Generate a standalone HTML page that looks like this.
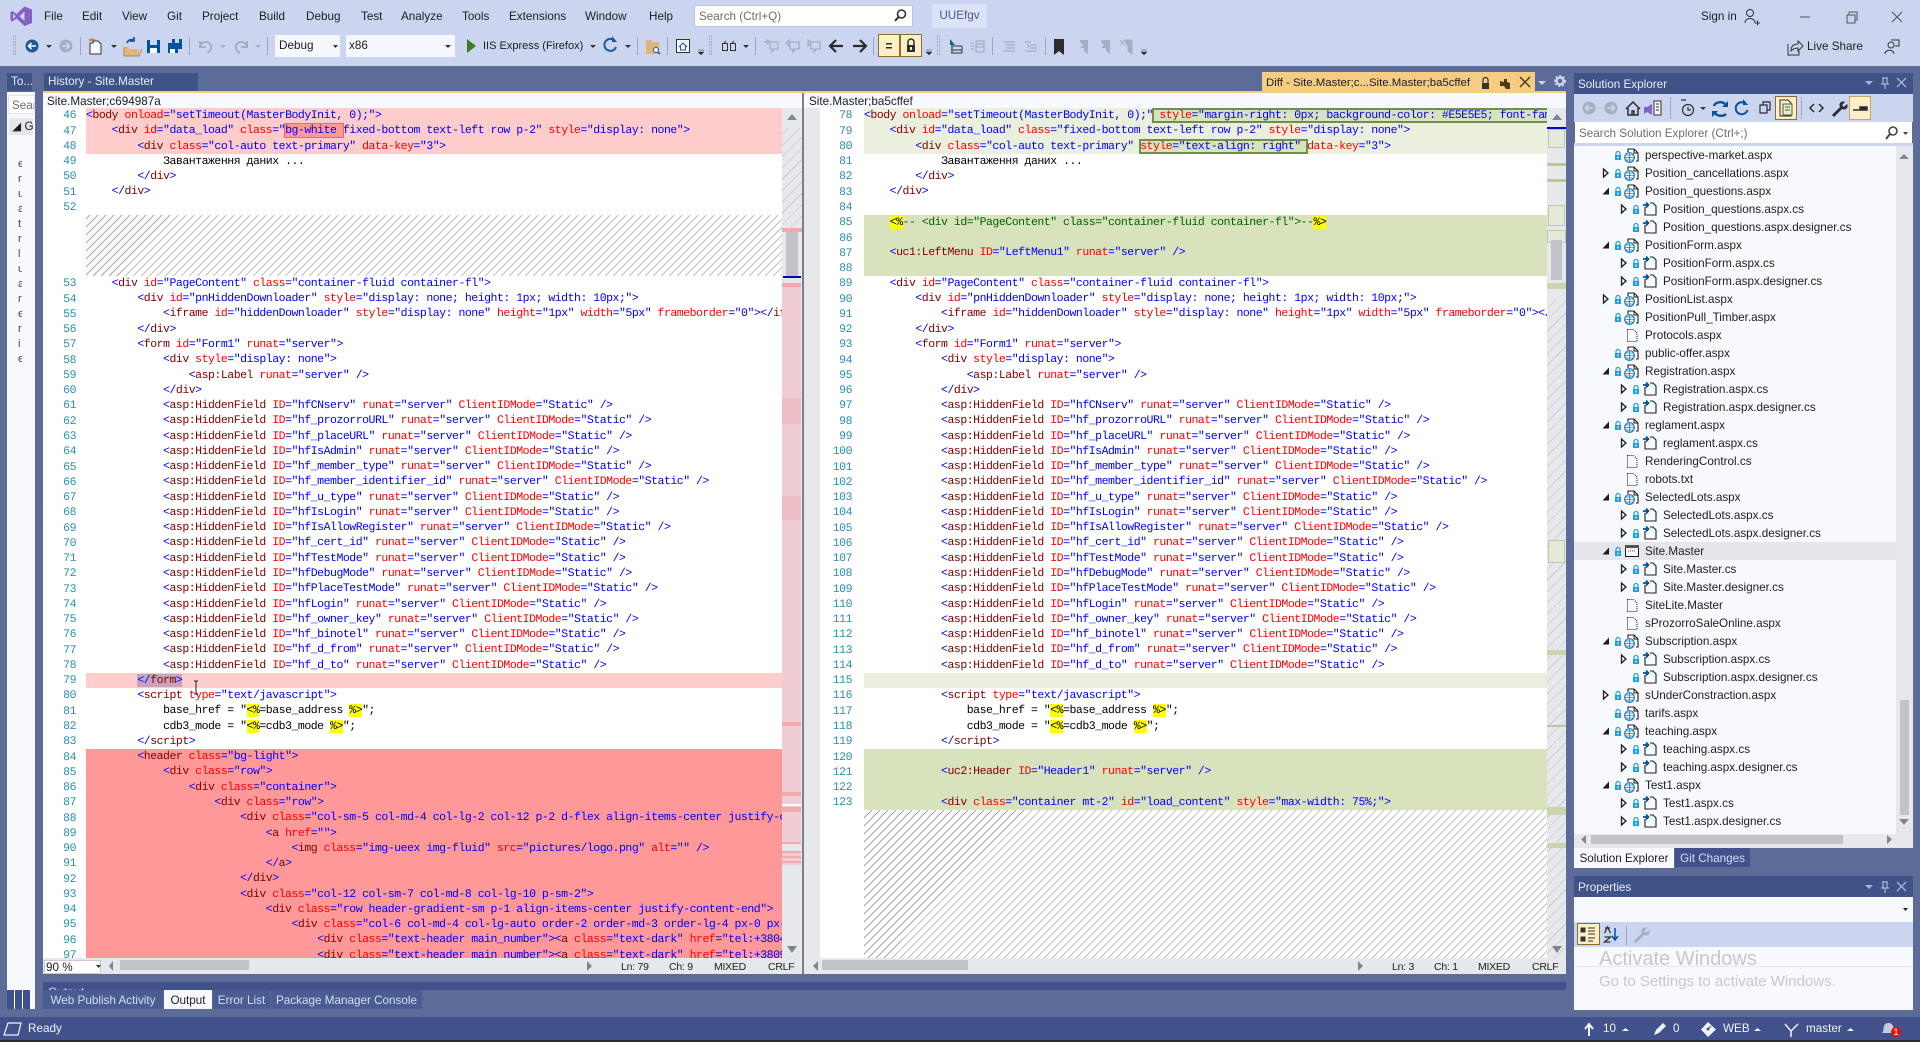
<!DOCTYPE html>
<html lang="en"><head><meta charset="utf-8"><title>Visual Studio</title>
<style>
html,body{margin:0;padding:0;width:1920px;height:1042px;overflow:hidden;background:#5D6B99}
body{position:relative;font:11.7px/18px "Liberation Sans",sans-serif;color:#1E1E1E}
.a{position:absolute;white-space:nowrap}
.b{position:absolute}
.c{position:absolute;top:108px;overflow:hidden;font:11.5px "Liberation Mono","DejaVu Sans Mono",monospace;letter-spacing:-.48px;color:#00f;text-rendering:geometricPrecision;background:#fff}
.c div{height:15.27px;line-height:16px;white-space:pre}
.n{position:absolute;top:108.4px;text-align:right;margin:0;font:11.5px/15.27px "Liberation Mono","DejaVu Sans Mono",monospace;letter-spacing:-.48px;color:#2B91AF;text-rendering:geometricPrecision}
i{font-style:normal;color:#800000}
b{font-weight:normal;color:#f00}
u{text-decoration:none;color:#000}
s{text-decoration:none;background:#ff0;color:#000}
em{font-style:normal;color:#006400}
.p1{background:#FFCCCC}.p2{background:#FF9999}.g1{background:#EBF0DE}.g2{background:#D8E2BC}
.c div.h{background:repeating-linear-gradient(-45deg,#a8a8a8 0,#a8a8a8 .8px,#fff .8px,#fff 5.66px)}
.wr{outline:1.5px solid #E8696B;outline-offset:-.5px;background:#FF9999}
.wg{outline:2px solid #6F8F4B;outline-offset:-1px;background:#D8E2BC}
.tr{position:absolute;left:1574px;top:146px;width:322px;height:688px;overflow:hidden;background:#F8F9FE}
.t{position:relative;height:18px;line-height:20px;padding-left:71px;white-space:nowrap}
.d{padding-left:89px}
.t svg{position:absolute;left:26px;top:0;width:42px;height:18px}
.d svg{left:44px}
.bt{color:#D5DDF2;background:#4A5C92;height:19px;line-height:21px;text-align:center}
.st{position:absolute;white-space:nowrap;top:959px;font-size:10.5px;line-height:16px;letter-spacing:-.25px}
svg.o{position:absolute;left:0;top:0;pointer-events:none}
</style></head><body>
<svg width="0" height="0" style="position:absolute"><defs>
<g id="c"><path d="M3.5 5l4.500 4-4.500 4z" fill="none" stroke="#1E1E1E" stroke-width="1.300"/></g>
<g id="e"><path d="M9 5.500v7H2.500z" fill="#1E1E1E"/></g>
<g id="l"><path d="M16 9V7.500a2 2 0 0 1 4 0V9" fill="none" stroke="#1BA1E2" stroke-width="1.200"/><rect x="15" y="9" width="6" height="5" fill="#1BA1E2"/><rect x="17.400" y="10.500" width="1.200" height="2" fill="#fff"/></g>
<g id="w"><use href="#l"/><path d="M28 6V3h6l4 4v8h-2" fill="#fff" stroke="#1E1E1E" stroke-width="1.100"/><path d="M34 3v4h4" fill="none" stroke="#1E1E1E"/><circle cx="29.500" cy="11.500" r="4.800" fill="#fff" stroke="#1C7CBF" stroke-width="1.200"/><path d="M24.700 11.500h9.600M29.500 6.700v9.600M26 9h7M26 14h7" stroke="#1C7CBF" stroke-width=".8"/></g>
<g id="f"><use href="#l"/><path d="M27 7v8h11V6l-3-3h-3" fill="#F8F9FE" stroke="#1E1E1E" stroke-width="1.100"/><path d="M25 5h5M28 2.500l2.500 2.500-2.500 2.500" fill="none" stroke="#00539C" stroke-width="1.700"/></g>
<g id="x"><path d="M27.500 3.500h6l3.500 3.500v8.500h-9.500z" fill="none" stroke="#1E1E1E" stroke-dasharray="1 1"/></g>
<g id="m"><use href="#l"/><rect x="25.500" y="3.500" width="13" height="11" fill="#F8F9FE" stroke="#1E1E1E"/><rect x="25" y="3" width="14" height="3" fill="#555"/><path d="M28 9h8" stroke="#555" stroke-dasharray="1 1"/></g>
</defs></svg>

<!-- chrome -->
<div class="b" style="left:0;top:0;width:1920px;height:66px;background:#CCD5F0"></div>
<div class="a" style="left:44px;top:8px">File</div><div class="a" style="left:82px;top:8px">Edit</div><div class="a" style="left:122px;top:8px">View</div><div class="a" style="left:167px;top:8px">Git</div><div class="a" style="left:202px;top:8px">Project</div><div class="a" style="left:259px;top:8px">Build</div><div class="a" style="left:306px;top:8px">Debug</div><div class="a" style="left:361px;top:8px">Test</div><div class="a" style="left:401px;top:8px">Analyze</div><div class="a" style="left:462px;top:8px">Tools</div><div class="a" style="left:509px;top:8px">Extensions</div><div class="a" style="left:585px;top:8px">Window</div><div class="a" style="left:649px;top:8px">Help</div>
<div class="b" style="left:694px;top:5px;width:219px;height:22px;background:#fff;border:1px solid #B9C3E0;box-sizing:border-box"></div>
<div class="a" style="left:699px;top:8px;color:#6D6D6D">Search (Ctrl+Q)</div>
<div class="a" style="left:932px;top:4px;width:55px;height:24px;line-height:24px;background:#DCE3F6;text-align:center;color:#4F5B7A">UUEfgv</div>
<div class="a" style="left:1701px;top:8px">Sign in</div>
<div class="a" style="left:1807px;top:38px">Live Share</div>
<div class="a" style="left:275px;top:35px;width:65px;height:22px;line-height:22px;background:#F6F7FE;padding-left:4px;box-sizing:border-box">Debug</div>
<div class="a" style="left:346px;top:35px;width:109px;height:22px;line-height:22px;background:#F6F7FE;padding-left:3px;box-sizing:border-box">x86</div>
<div class="a" style="left:483px;top:37px;font-size:11px">IIS Express (Firefox)</div>

<!-- left panel -->
<div class="b" style="left:7px;top:73px;width:25px;height:18px;background:#3F5389"></div>
<div class="a" style="left:11px;top:73px;color:#E8ECF8">To...</div>
<div class="b" style="left:7px;top:92px;width:28px;height:917px;background:#F8F9FE;overflow:hidden">
<div class="a" style="left:1px;top:3px;width:27px;height:19px;line-height:19px;background:#fff;border:1px solid #E0E3EE;box-sizing:border-box;color:#6D6D6D;padding-left:3px;overflow:hidden">Sear</div>
<div class="a" style="left:2px;top:26px;width:24px;height:17px;line-height:17px;background:#E6E7ED;overflow:hidden">&nbsp;◢ G</div>
<div class="a" style="left:11px;top:65px;line-height:15px;font-size:11px;width:4px;overflow:hidden;color:#444">e<br>r<br>u<br>a<br>t<br>r<br>l<br>u<br>a<br>n<br>e<br>r<br>i<br>e</div>
<div class="b" style="left:0;top:898px;width:7px;height:19px;background:#40518B"></div><div class="b" style="left:8px;top:898px;width:7px;height:19px;background:#40518B"></div><div class="b" style="left:15.500px;top:898px;width:7px;height:19px;background:#40518B"></div>
</div>

<!-- doc tabs -->
<div class="a" style="left:44px;top:73px;width:154px;height:18px;line-height:18px;background:#3F5389;color:#E8ECF8;padding-left:4px;box-sizing:border-box">History - Site.Master</div>
<div class="a" style="left:1262px;top:72px;width:273px;height:20px;line-height:22px;background:#F5CC84;padding-left:4px;box-sizing:border-box;font-size:11.4px">Diff - Site.Master;c...Site.Master;ba5cffef</div>
<div class="b" style="left:43px;top:91px;width:1523px;height:2px;background:#F5CC84"></div>
<div class="b" style="left:43px;top:93px;width:1523px;height:15px;background:#F8F9FE"></div>
<div class="a" style="left:47px;top:94px;line-height:15px">Site.Master;c694987a</div>
<div class="a" style="left:809px;top:94px;line-height:15px">Site.Master;ba5cffef</div>

<!-- left editor -->
<div class="b" style="left:43px;top:108px;width:43px;height:850px;background:#fff"></div>
<pre class="n" style="left:43px;width:33px">46
47
48
49
50
51
52




53
54
55
56
57
58
59
60
61
62
63
64
65
66
67
68
69
70
71
72
73
74
75
76
77
78
79
80
81
82
83
84
85
86
87
88
89
90
91
92
93
94
95
96
97</pre>
<div class="c" style="left:86px;width:696px;height:850px">
<div class="p1">&lt;<i>body</i> <b>onload</b>="setTimeout(MasterBodyInit, 0);"&gt;</div>
<div class="p1">    &lt;<i>div</i> <b>id</b>="data_load" <b>class</b>="<span class="wr">bg-white </span>fixed-bottom text-left row p-2" <b>style</b>="display: none"&gt;</div>
<div class="p1">        &lt;<i>div</i> <b>class</b>="col-auto text-primary" <b>data-key</b>="3"&gt;</div>
<div>            <u>Завантаження даних ...</u></div>
<div>        &lt;/<i>div</i>&gt;</div>
<div>    &lt;/<i>div</i>&gt;</div>
<div></div>
<div class="h" style="height:61.08px"></div>
<div>    &lt;<i>div</i> <b>id</b>="PageContent" <b>class</b>="container-fluid container-fl"&gt;</div>
<div>        &lt;<i>div</i> <b>id</b>="pnHiddenDownloader" <b>style</b>="display: none; height: 1px; width: 10px;"&gt;</div>
<div>            &lt;<i>iframe</i> <b>id</b>="hiddenDownloader" <b>style</b>="display: none" <b>height</b>="1px" <b>width</b>="5px" <b>frameborder</b>="0"&gt;&lt;/<i>iframe</i>&gt;</div>
<div>        &lt;/<i>div</i>&gt;</div>
<div>        &lt;<i>form</i> <b>id</b>="Form1" <b>runat</b>="server"&gt;</div>
<div>            &lt;<i>div</i> <b>style</b>="display: none"&gt;</div>
<div>                &lt;<i>asp:Label</i> <b>runat</b>="server" /&gt;</div>
<div>            &lt;/<i>div</i>&gt;</div>
<div>            &lt;<i>asp:HiddenField</i> <b>ID</b>="hfCNserv" <b>runat</b>="server" <b>ClientIDMode</b>="Static" /&gt;</div>
<div>            &lt;<i>asp:HiddenField</i> <b>ID</b>="hf_prozorroURL" <b>runat</b>="server" <b>ClientIDMode</b>="Static" /&gt;</div>
<div>            &lt;<i>asp:HiddenField</i> <b>ID</b>="hf_placeURL" <b>runat</b>="server" <b>ClientIDMode</b>="Static" /&gt;</div>
<div>            &lt;<i>asp:HiddenField</i> <b>ID</b>="hfIsAdmin" <b>runat</b>="server" <b>ClientIDMode</b>="Static" /&gt;</div>
<div>            &lt;<i>asp:HiddenField</i> <b>ID</b>="hf_member_type" <b>runat</b>="server" <b>ClientIDMode</b>="Static" /&gt;</div>
<div>            &lt;<i>asp:HiddenField</i> <b>ID</b>="hf_member_identifier_id" <b>runat</b>="server" <b>ClientIDMode</b>="Static" /&gt;</div>
<div>            &lt;<i>asp:HiddenField</i> <b>ID</b>="hf_u_type" <b>runat</b>="server" <b>ClientIDMode</b>="Static" /&gt;</div>
<div>            &lt;<i>asp:HiddenField</i> <b>ID</b>="hfIsLogin" <b>runat</b>="server" <b>ClientIDMode</b>="Static" /&gt;</div>
<div>            &lt;<i>asp:HiddenField</i> <b>ID</b>="hfIsAllowRegister" <b>runat</b>="server" <b>ClientIDMode</b>="Static" /&gt;</div>
<div>            &lt;<i>asp:HiddenField</i> <b>ID</b>="hf_cert_id" <b>runat</b>="server" <b>ClientIDMode</b>="Static" /&gt;</div>
<div>            &lt;<i>asp:HiddenField</i> <b>ID</b>="hfTestMode" <b>runat</b>="server" <b>ClientIDMode</b>="Static" /&gt;</div>
<div>            &lt;<i>asp:HiddenField</i> <b>ID</b>="hfDebugMode" <b>runat</b>="server" <b>ClientIDMode</b>="Static" /&gt;</div>
<div>            &lt;<i>asp:HiddenField</i> <b>ID</b>="hfPlaceTestMode" <b>runat</b>="server" <b>ClientIDMode</b>="Static" /&gt;</div>
<div>            &lt;<i>asp:HiddenField</i> <b>ID</b>="hfLogin" <b>runat</b>="server" <b>ClientIDMode</b>="Static" /&gt;</div>
<div>            &lt;<i>asp:HiddenField</i> <b>ID</b>="hf_owner_key" <b>runat</b>="server" <b>ClientIDMode</b>="Static" /&gt;</div>
<div>            &lt;<i>asp:HiddenField</i> <b>ID</b>="hf_binotel" <b>runat</b>="server" <b>ClientIDMode</b>="Static" /&gt;</div>
<div>            &lt;<i>asp:HiddenField</i> <b>ID</b>="hf_d_from" <b>runat</b>="server" <b>ClientIDMode</b>="Static" /&gt;</div>
<div>            &lt;<i>asp:HiddenField</i> <b>ID</b>="hf_d_to" <b>runat</b>="server" <b>ClientIDMode</b>="Static" /&gt;</div>
<div class="p1">        <span style="background:#C9A3BE">&lt;/<i>form</i>&gt;</span></div>
<div>        &lt;<i>script</i> <b>type</b>="text/javascript"&gt;</div>
<div>            <u>base_href = "<s>&lt;%</s>=base_address <s>%&gt;</s>";</u></div>
<div>            <u>cdb3_mode = "<s>&lt;%</s>=cdb3_mode <s>%&gt;</s>";</u></div>
<div>        &lt;/<i>script</i>&gt;</div>
<div class="p2">        &lt;<i>header</i> <b>class</b>="bg-light"&gt;</div>
<div class="p2">            &lt;<i>div</i> <b>class</b>="row"&gt;</div>
<div class="p2">                &lt;<i>div</i> <b>class</b>="container"&gt;</div>
<div class="p2">                    &lt;<i>div</i> <b>class</b>="row"&gt;</div>
<div class="p2">                        &lt;<i>div</i> <b>class</b>="col-sm-5 col-md-4 col-lg-2 col-12 p-2 d-flex align-items-center justify-content-center"&gt;</div>
<div class="p2">                            &lt;<i>a</i> <b>href</b>=""&gt;</div>
<div class="p2">                                &lt;<i>img</i> <b>class</b>="img-ueex img-fluid" <b>src</b>="pictures/logo.png" <b>alt</b>="" /&gt;</div>
<div class="p2">                            &lt;/<i>a</i>&gt;</div>
<div class="p2">                        &lt;/<i>div</i>&gt;</div>
<div class="p2">                        &lt;<i>div</i> <b>class</b>="col-12 col-sm-7 col-md-8 col-lg-10 p-sm-2"&gt;</div>
<div class="p2">                            &lt;<i>div</i> <b>class</b>="row header-gradient-sm p-1 align-items-center justify-content-end"&gt;</div>
<div class="p2">                                &lt;<i>div</i> <b>class</b>="col-6 col-md-4 col-lg-auto order-2 order-md-3 order-lg-4 px-0 px-md-2"&gt;</div>
<div class="p2">                                    &lt;<i>div</i> <b>class</b>="text-header main_number"&gt;&lt;<i>a</i> <b>class</b>="text-dark" <b>href</b>="tel:+380441234567"&gt;</div>
<div class="p2">                                    &lt;<i>div</i> <b>class</b>="text-header main_number"&gt;&lt;<i>a</i> <b>class</b>="text-dark" <b>href</b>="tel:+380991234567"&gt;</div>
</div>

<!-- left scrollbar -->
<div class="b" style="left:782px;top:108px;width:20px;height:850px;background:#E7E8EC;overflow:hidden">
<div class="b" style="left:0;top:20px;width:20px;height:100px;background:repeating-linear-gradient(-45deg,#C4C6CE 0,#C4C6CE .8px,transparent .8px,transparent 8px)"></div>
<div class="b" style="left:0;top:120px;width:20px;height:4px;background:#F2A9AD"></div>
<div class="b" style="left:4px;top:124px;width:12px;height:46px;background:#C2C3C9"></div>
<div class="b" style="left:1px;top:168px;width:18px;height:2px;background:#0000C8"></div>
<div class="b" style="left:0;top:175px;width:19px;height:559px;background:#EFCDD2"></div>
<div class="b" style="left:0;top:175px;width:19px;height:4px;background:#F2A9AD"></div>
<div class="b" style="left:0;top:290px;width:19px;height:26px;background:#EBBEC4"></div>
<div class="b" style="left:0;top:388px;width:19px;height:24px;background:#EBBEC4"></div>
<div class="b" style="left:0;top:614px;width:19px;height:4px;background:#F2A9AD"></div>
<div class="b" style="left:0;top:684px;width:19px;height:4px;background:#F2A9AD"></div>
<div class="b" style="left:0;top:696px;width:19px;height:2px;background:#fff"></div>
<div class="b" style="left:0;top:699px;width:19px;height:5px;background:#F2A9AD"></div>
<div class="b" style="left:0;top:734px;width:19px;height:2px;background:#F2A9AD"></div>
<div class="b" style="left:0;top:743px;width:19px;height:14px;background:repeating-linear-gradient(180deg,#F2A9AD 0,#F2A9AD 2px,#EFCDD2 2px,#EFCDD2 5px)"></div>
</div>
<div class="b" style="left:802px;top:93px;width:2px;height:881px;background:#7D7F88"></div>

<!-- right editor -->
<div class="b" style="left:804px;top:108px;width:16px;height:850px;background:#E7E8EC"></div>
<div class="b" style="left:820px;top:108px;width:44px;height:850px;background:#fff"></div>
<pre class="n" style="left:820px;width:32px">78
79
80
81
82
83
84
85
86
87
88
89
90
91
92
93
94
95
96
97
98
99
100
101
102
103
104
105
106
107
108
109
110
111
112
113
114
115
116
117
118
119
120
121
122
123</pre>
<div class="c" style="left:864px;width:683px;height:850px">
<div class="g1">&lt;<i>body</i> <b>onload</b>="setTimeout(MasterBodyInit, 0);"<span class="wg"> <b>style</b>="margin-right: 0px; background-color: #E5E5E5; font-family: Arial, Helvetica"</span></div>
<div class="g1">    &lt;<i>div</i> <b>id</b>="data_load" <b>class</b>="fixed-bottom text-left row p-2" <b>style</b>="display: none"&gt;</div>
<div class="g1">        &lt;<i>div</i> <b>class</b>="col-auto text-primary" <span class="wg"><b>style</b>="text-align: right" </span><b>data-key</b>="3"&gt;</div>
<div>            <u>Завантаження даних ...</u></div>
<div>        &lt;/<i>div</i>&gt;</div>
<div>    &lt;/<i>div</i>&gt;</div>
<div></div>
<div class="g2">    <s>&lt;%</s><em>-- &lt;div id="PageContent" class="container-fluid container-fl"&gt;--</em><s>%&gt;</s></div>
<div class="g2"></div>
<div class="g2">    &lt;<i>uc1:LeftMenu</i> <b>ID</b>="LeftMenu1" <b>runat</b>="server" /&gt;</div>
<div class="g2"></div>
<div>    &lt;<i>div</i> <b>id</b>="PageContent" <b>class</b>="container-fluid container-fl"&gt;</div>
<div>        &lt;<i>div</i> <b>id</b>="pnHiddenDownloader" <b>style</b>="display: none; height: 1px; width: 10px;"&gt;</div>
<div>            &lt;<i>iframe</i> <b>id</b>="hiddenDownloader" <b>style</b>="display: none" <b>height</b>="1px" <b>width</b>="5px" <b>frameborder</b>="0"&gt;&lt;/<i>iframe</i>&gt;</div>
<div>        &lt;/<i>div</i>&gt;</div>
<div>        &lt;<i>form</i> <b>id</b>="Form1" <b>runat</b>="server"&gt;</div>
<div>            &lt;<i>div</i> <b>style</b>="display: none"&gt;</div>
<div>                &lt;<i>asp:Label</i> <b>runat</b>="server" /&gt;</div>
<div>            &lt;/<i>div</i>&gt;</div>
<div>            &lt;<i>asp:HiddenField</i> <b>ID</b>="hfCNserv" <b>runat</b>="server" <b>ClientIDMode</b>="Static" /&gt;</div>
<div>            &lt;<i>asp:HiddenField</i> <b>ID</b>="hf_prozorroURL" <b>runat</b>="server" <b>ClientIDMode</b>="Static" /&gt;</div>
<div>            &lt;<i>asp:HiddenField</i> <b>ID</b>="hf_placeURL" <b>runat</b>="server" <b>ClientIDMode</b>="Static" /&gt;</div>
<div>            &lt;<i>asp:HiddenField</i> <b>ID</b>="hfIsAdmin" <b>runat</b>="server" <b>ClientIDMode</b>="Static" /&gt;</div>
<div>            &lt;<i>asp:HiddenField</i> <b>ID</b>="hf_member_type" <b>runat</b>="server" <b>ClientIDMode</b>="Static" /&gt;</div>
<div>            &lt;<i>asp:HiddenField</i> <b>ID</b>="hf_member_identifier_id" <b>runat</b>="server" <b>ClientIDMode</b>="Static" /&gt;</div>
<div>            &lt;<i>asp:HiddenField</i> <b>ID</b>="hf_u_type" <b>runat</b>="server" <b>ClientIDMode</b>="Static" /&gt;</div>
<div>            &lt;<i>asp:HiddenField</i> <b>ID</b>="hfIsLogin" <b>runat</b>="server" <b>ClientIDMode</b>="Static" /&gt;</div>
<div>            &lt;<i>asp:HiddenField</i> <b>ID</b>="hfIsAllowRegister" <b>runat</b>="server" <b>ClientIDMode</b>="Static" /&gt;</div>
<div>            &lt;<i>asp:HiddenField</i> <b>ID</b>="hf_cert_id" <b>runat</b>="server" <b>ClientIDMode</b>="Static" /&gt;</div>
<div>            &lt;<i>asp:HiddenField</i> <b>ID</b>="hfTestMode" <b>runat</b>="server" <b>ClientIDMode</b>="Static" /&gt;</div>
<div>            &lt;<i>asp:HiddenField</i> <b>ID</b>="hfDebugMode" <b>runat</b>="server" <b>ClientIDMode</b>="Static" /&gt;</div>
<div>            &lt;<i>asp:HiddenField</i> <b>ID</b>="hfPlaceTestMode" <b>runat</b>="server" <b>ClientIDMode</b>="Static" /&gt;</div>
<div>            &lt;<i>asp:HiddenField</i> <b>ID</b>="hfLogin" <b>runat</b>="server" <b>ClientIDMode</b>="Static" /&gt;</div>
<div>            &lt;<i>asp:HiddenField</i> <b>ID</b>="hf_owner_key" <b>runat</b>="server" <b>ClientIDMode</b>="Static" /&gt;</div>
<div>            &lt;<i>asp:HiddenField</i> <b>ID</b>="hf_binotel" <b>runat</b>="server" <b>ClientIDMode</b>="Static" /&gt;</div>
<div>            &lt;<i>asp:HiddenField</i> <b>ID</b>="hf_d_from" <b>runat</b>="server" <b>ClientIDMode</b>="Static" /&gt;</div>
<div>            &lt;<i>asp:HiddenField</i> <b>ID</b>="hf_d_to" <b>runat</b>="server" <b>ClientIDMode</b>="Static" /&gt;</div>
<div class="g1"></div>
<div>            &lt;<i>script</i> <b>type</b>="text/javascript"&gt;</div>
<div>                <u>base_href = "<s>&lt;%</s>=base_address <s>%&gt;</s>";</u></div>
<div>                <u>cdb3_mode = "<s>&lt;%</s>=cdb3_mode <s>%&gt;</s>";</u></div>
<div>            &lt;/<i>script</i>&gt;</div>
<div class="g2"></div>
<div class="g2">            &lt;<i>uc2:Header</i> <b>ID</b>="Header1" <b>runat</b>="server" /&gt;</div>
<div class="g2"></div>
<div class="g2">            &lt;<i>div</i> <b>class</b>="container mt-2" <b>id</b>="load_content" <b>style</b>="max-width: 75%;"&gt;</div>
<div class="h" style="height:150px"></div>
</div>

<!-- right scrollbar -->
<div class="b" style="left:1547px;top:108px;width:19px;height:850px;background:#E7E8EC;overflow:hidden">
<div class="b" style="left:0;top:192px;width:19px;height:658px;background:repeating-linear-gradient(-45deg,#C9CBD2 0,#C9CBD2 .8px,transparent .8px,transparent 8px)"></div>
<div class="b" style="left:0;top:19px;width:19px;height:2px;background:#0000C8"></div>
<div class="b" style="left:1px;top:21px;width:17px;height:19px;background:#E4E9D8;border:1px solid #BCC9A2;box-sizing:border-box"></div>
<div class="b" style="left:0;top:55px;width:19px;height:3px;background:#B9C79A"></div>
<div class="b" style="left:0;top:71px;width:19px;height:3px;background:#B9C79A"></div>
<div class="b" style="left:1px;top:97px;width:17px;height:21px;background:#E4E9D8;border:1px solid #BCC9A2;box-sizing:border-box"></div>
<div class="b" style="left:0;top:122px;width:19px;height:13px;background:#E4E9D8;border:1px solid #BCC9A2;box-sizing:border-box"></div>
<div class="b" style="left:4px;top:132px;width:11px;height:40px;background:#C2C3C9"></div>
<div class="b" style="left:0;top:175px;width:19px;height:6px;background:#C9D5AC"></div>
<div class="b" style="left:1px;top:432px;width:17px;height:23px;background:#E4E9D8;border:1px solid #BCC9A2;box-sizing:border-box"></div>
<div class="b" style="left:0;top:542px;width:19px;height:5px;background:#C9D5AC"></div>
<div class="b" style="left:0;top:617px;width:19px;height:2px;background:#B9C79A"></div>
<div class="b" style="left:0;top:699px;width:19px;height:8px;background:#C9D5AC"></div>
<div class="b" style="left:0;top:735px;width:19px;height:5px;background:#C9D5AC"></div>
</div>

<!-- editor status strips -->
<div class="b" style="left:43px;top:958px;width:759px;height:16px;background:#E7E8EC"></div>
<div class="b" style="left:804px;top:958px;width:762px;height:16px;background:#E7E8EC"></div>
<div class="a" style="left:44px;top:960px;width:57px;height:14px;line-height:14px;background:#fff;border:1px solid #ccc;box-sizing:border-box;padding-left:1px">90 %</div>
<div class="b" style="left:120px;top:960px;width:129px;height:10px;background:#C2C3C9"></div>
<div class="b" style="left:822px;top:960px;width:146px;height:10px;background:#C2C3C9"></div>
<div class="st" style="left:621px">Ln: 79</div><div class="st" style="left:669px">Ch: 9</div><div class="st" style="left:714px">MIXED</div><div class="st" style="left:768px">CRLF</div>
<div class="st" style="left:1392px">Ln: 3</div><div class="st" style="left:1434px">Ch: 1</div><div class="st" style="left:1478px">MIXED</div><div class="st" style="left:1532px">CRLF</div>

<!-- output -->
<div class="b" style="left:43px;top:982px;width:1523px;height:8px;background:#40518B;overflow:hidden"></div>
<div class="a" style="left:48px;top:986px;color:#D5DDF2;height:4px;overflow:hidden;font-size:12px;line-height:12px">Output</div>
<div class="a bt" style="left:43px;top:990px;width:120px">Web Publish Activity</div>
<div class="a bt" style="left:164px;top:990px;width:48px;background:#F8F9FE;color:#1E1E1E">Output</div>
<div class="a bt" style="left:213px;top:990px;width:57px">Error List</div>
<div class="a bt" style="left:271px;top:990px;width:151px">Package Manager Console</div>

<!-- solution explorer -->
<div class="a" style="left:1574px;top:73px;width:339px;height:21px;line-height:23px;background:#3F5389;color:#E8ECF8;padding-left:4px;box-sizing:border-box">Solution Explorer</div>
<div class="b" style="left:1574px;top:94px;width:339px;height:28px;background:#CCD5F0"></div>
<div class="b" style="left:1775px;top:96px;width:22px;height:24px;background:#FFEFC9;border:1px solid #8E6B2E;box-sizing:border-box"></div>
<div class="b" style="left:1849px;top:96px;width:22px;height:24px;background:#FFEFC9;border:1px solid #C9A86A;box-sizing:border-box"></div>
<div class="a" style="left:1575px;top:122px;width:337px;height:21px;line-height:23px;background:#fff;color:#6D6D6D;padding-left:4px;box-sizing:border-box">Search Solution Explorer (Ctrl+;)</div>
<div class="b" style="left:1574px;top:143px;width:339px;height:3px;background:#CCD5F0"></div>
<div class="tr">
<div class="t"><svg><use href="#w"/></svg>perspective-market.aspx</div>
<div class="t"><svg><use href="#c"/><use href="#w"/></svg>Position_cancellations.aspx</div>
<div class="t"><svg><use href="#e"/><use href="#w"/></svg>Position_questions.aspx</div>
<div class="t d"><svg><use href="#c"/><use href="#f"/></svg>Position_questions.aspx.cs</div>
<div class="t d"><svg><use href="#f"/></svg>Position_questions.aspx.designer.cs</div>
<div class="t"><svg><use href="#e"/><use href="#w"/></svg>PositionForm.aspx</div>
<div class="t d"><svg><use href="#c"/><use href="#f"/></svg>PositionForm.aspx.cs</div>
<div class="t d"><svg><use href="#c"/><use href="#f"/></svg>PositionForm.aspx.designer.cs</div>
<div class="t"><svg><use href="#c"/><use href="#w"/></svg>PositionList.aspx</div>
<div class="t"><svg><use href="#w"/></svg>PositionPull_Timber.aspx</div>
<div class="t"><svg><use href="#x"/></svg>Protocols.aspx</div>
<div class="t"><svg><use href="#w"/></svg>public-offer.aspx</div>
<div class="t"><svg><use href="#e"/><use href="#w"/></svg>Registration.aspx</div>
<div class="t d"><svg><use href="#c"/><use href="#f"/></svg>Registration.aspx.cs</div>
<div class="t d"><svg><use href="#c"/><use href="#f"/></svg>Registration.aspx.designer.cs</div>
<div class="t"><svg><use href="#e"/><use href="#w"/></svg>reglament.aspx</div>
<div class="t d"><svg><use href="#c"/><use href="#f"/></svg>reglament.aspx.cs</div>
<div class="t"><svg><use href="#x"/></svg>RenderingControl.cs</div>
<div class="t"><svg><use href="#x"/></svg>robots.txt</div>
<div class="t"><svg><use href="#e"/><use href="#w"/></svg>SelectedLots.aspx</div>
<div class="t d"><svg><use href="#c"/><use href="#f"/></svg>SelectedLots.aspx.cs</div>
<div class="t d"><svg><use href="#c"/><use href="#f"/></svg>SelectedLots.aspx.designer.cs</div>
<div class="t" style="background:#E6E7ED"><svg><use href="#e"/><use href="#m"/></svg>Site.Master</div>
<div class="t d"><svg><use href="#c"/><use href="#f"/></svg>Site.Master.cs</div>
<div class="t d"><svg><use href="#c"/><use href="#f"/></svg>Site.Master.designer.cs</div>
<div class="t"><svg><use href="#x"/></svg>SiteLite.Master</div>
<div class="t"><svg><use href="#x"/></svg>sProzorroSaleOnline.aspx</div>
<div class="t"><svg><use href="#e"/><use href="#w"/></svg>Subscription.aspx</div>
<div class="t d"><svg><use href="#c"/><use href="#f"/></svg>Subscription.aspx.cs</div>
<div class="t d"><svg><use href="#f"/></svg>Subscription.aspx.designer.cs</div>
<div class="t"><svg><use href="#c"/><use href="#w"/></svg>sUnderConstraction.aspx</div>
<div class="t"><svg><use href="#w"/></svg>tarifs.aspx</div>
<div class="t"><svg><use href="#e"/><use href="#w"/></svg>teaching.aspx</div>
<div class="t d"><svg><use href="#c"/><use href="#f"/></svg>teaching.aspx.cs</div>
<div class="t d"><svg><use href="#c"/><use href="#f"/></svg>teaching.aspx.designer.cs</div>
<div class="t"><svg><use href="#e"/><use href="#w"/></svg>Test1.aspx</div>
<div class="t d"><svg><use href="#c"/><use href="#f"/></svg>Test1.aspx.cs</div>
<div class="t d"><svg><use href="#c"/><use href="#f"/></svg>Test1.aspx.designer.cs</div>
</div>
<div class="b" style="left:1896px;top:146px;width:17px;height:688px;background:#E7E8EC"></div>
<div class="b" style="left:1900px;top:700px;width:9px;height:115px;background:#C2C3C9"></div>
<div class="b" style="left:1574px;top:834px;width:339px;height:14px;background:#E7E8EC"></div>
<div class="b" style="left:1591px;top:835px;width:252px;height:9px;background:#C2C3C9"></div>
<div class="a" style="left:1574px;top:848px;width:100px;height:20px;line-height:22px;background:#F8F9FE;text-align:center">Solution Explorer</div>
<div class="a" style="left:1675px;top:848px;width:75px;height:19px;line-height:21px;background:#40518B;text-align:center;color:#D5DDF2">Git Changes</div>

<!-- properties -->
<div class="a" style="left:1574px;top:876px;width:339px;height:21px;line-height:23px;background:#3F5389;color:#E8ECF8;padding-left:4px;box-sizing:border-box">Properties</div>
<div class="b" style="left:1574px;top:897px;width:339px;height:113px;background:#F8F9FE"></div>
<div class="b" style="left:1574px;top:922px;width:339px;height:25px;background:#CCD5F0"></div>
<div class="b" style="left:1577px;top:923px;width:23px;height:22px;background:#FFEFC9;border:1px solid #8E6B2E;box-sizing:border-box"></div>
<div class="b" style="left:1574px;top:966px;width:339px;height:1px;background:#E6E7ED"></div>
<div class="a" style="left:1599px;top:948px;font-size:20px;line-height:23px;color:#C6C8CE">Activate Windows</div>
<div class="a" style="left:1599px;top:973px;font-size:15px;line-height:18px;color:#C6C8CE">Go to Settings to activate Windows.</div>

<!-- status bar -->
<div class="b" style="left:0;top:1017px;width:1920px;height:23px;background:#40518B"></div>
<div class="b" style="left:0;top:1040px;width:1920px;height:2px;background:#2B2B2B"></div>
<div class="a" style="left:28px;top:1020px;color:#F0F3FB">Ready</div>
<div class="a" style="left:1603px;top:1020px;color:#F0F3FB">10</div>
<div class="a" style="left:1673px;top:1020px;color:#F0F3FB">0</div>
<div class="a" style="left:1723px;top:1020px;color:#F0F3FB">WEB</div>
<div class="a" style="left:1806px;top:1020px;color:#F0F3FB">master</div>

<!-- icons -->
<svg class="o" width="1920" height="1042" viewBox="0 0 1920 1042">
<!-- VS logo -->
<path d="M24.500 6.500L32 9.500V23L24.500 26 16.500 18.500 12.500 21.500 10.500 20.500V12L12.500 11 16.500 14zM24.500 11.500L19.500 16.250 24.500 21zM13 13.500v5.500l2.700-2.750z" fill="#8661C5" fill-rule="evenodd"/>
<!-- search -->
<circle cx="901.500" cy="14" r="4" fill="none" stroke="#333" stroke-width="1.600"/><path d="M898.500 17l-3.500 4" stroke="#333" stroke-width="2"/>
<!-- sign in -->
<circle cx="1750" cy="13" r="3.500" fill="none" stroke="#333"/><path d="M1745 23c0-6 10-6 10 0" fill="none" stroke="#333"/><path d="M1755 23h5M1757.500 20.500v5" stroke="#333"/>
<path d="M1800 17h10" stroke="#555"/>
<path d="M1847 15h8v8h-8zM1849 15v-3h8v8h-2" fill="none" stroke="#555"/>
<path d="M1892 12l10 10M1902 12l-10 10" stroke="#555" stroke-width="1.100"/>
<!-- live share -->
<path d="M1788 44v11h11v-4M1791 51c0-5 3-7 7-7v-3l5 5-5 5v-3c-3 0-5 1-7 3z" fill="none" stroke="#333"/>
<circle cx="1891" cy="45" r="3" fill="none" stroke="#333"/><path d="M1885 54c0-5 9-5 9 0" fill="none" stroke="#333"/><path d="M1891 40h8v6h-4" fill="none" stroke="#333"/>
<!-- toolbar left -->
<path d="M13 36h4M13 39h4M13 42h4M13 45h4M13 48h4M13 51h4M13 54h4" stroke="#7A84A0" stroke-dasharray="1 1"/>
<circle cx="32" cy="46" r="6.500" fill="#1C5A96"/><path d="M36 46h-7M31.500 43l-3 3 3 3" fill="none" stroke="#fff" stroke-width="1.600"/>
<path d="M46 45h6l-3 3z" fill="#333"/>
<circle cx="66" cy="46" r="6.500" fill="#A7AEC0"/><path d="M62 46h7M66.500 43l3 3-3 3" fill="none" stroke="#CCD5F0" stroke-width="1.600"/>
<path d="M80.500 37v18" stroke="#9AA6C8"/>
<path d="M90 43h3v-2h5l3 3v10H90z" fill="#F8F9FE" stroke="#333"/><path d="M92 37l1 2.500 2.500-1-1 2.500-2.500-.5-2.500.5-1-2.500 2.500 1z" fill="#C27D1A"/>
<path d="M111 45h6l-3 3z" fill="#333"/>
<path d="M124 47h4l2 2h9v7h-15z" fill="#DCB67A"/><path d="M124 47v9h15l3-7" fill="none" stroke="#B4863A"/><path d="M127 43c1-3 4-4 7-3M134 37v4h-4" fill="none" stroke="#1C5A96" stroke-width="1.800"/>
<rect x="147" y="40" width="13" height="13" fill="#00539C"/><rect x="150" y="40" width="7" height="5" fill="#CCD5F0"/><rect x="150" y="48" width="7" height="5" fill="#F8F9FE"/>
<rect x="168" y="43" width="10" height="10" fill="#00539C"/><rect x="172" y="39" width="10" height="10" fill="#00539C"/><rect x="175" y="39" width="4" height="4" fill="#CCD5F0"/><rect x="170" y="49" width="5" height="4" fill="#F8F9FE"/>
<path d="M189.500 37v18" stroke="#9AA6C8"/>
<path d="M200 41v6h6" fill="none" stroke="#A7AEC0" stroke-width="2"/><path d="M200 46c2-6 12-5 11 2 0 2-2 4-4 5" fill="none" stroke="#A7AEC0" stroke-width="2"/>
<path d="M220 45h6l-3 3z" fill="#A7AEC0"/>
<path d="M247 41v6h-6" fill="none" stroke="#A7AEC0" stroke-width="2"/><path d="M247 46c-2-6-12-5-11 2 0 2 2 4 4 5" fill="none" stroke="#A7AEC0" stroke-width="2"/>
<path d="M255 45h6l-3 3z" fill="#A7AEC0"/>
<path d="M267.500 37v18" stroke="#9AA6C8"/>
<path d="M333 45h5l-2.500 3z" fill="#333"/><path d="M445 45h6l-3 3z" fill="#333"/>
<path d="M467 39l9 7-9 7z" fill="#3A7D22"/>
<path d="M590 45h6l-3 3z" fill="#333"/>
<path d="M615 41a6 6 0 1 0 1 6" fill="none" stroke="#1C5A96" stroke-width="2"/><path d="M612 36v6h5z" fill="#1C5A96"/>
<path d="M625 45h6l-3 3z" fill="#333"/>
<path d="M637.500 37v18" stroke="#9AA6C8"/>
<path d="M646 40h5l2 2h6v12h-13z" fill="#DCB67A"/><circle cx="656" cy="50" r="2.500" fill="#fff" stroke="#1C5A96"/><path d="M658 52l2 2" stroke="#1C5A96" stroke-width="1.500"/>
<path d="M667.500 37v18" stroke="#9AA6C8"/>
<rect x="676.500" y="39.500" width="13" height="13" fill="#F8F9FE" stroke="#333"/><path d="M679 47l4-4 4 4M680.500 46v4h5v-4" fill="none" stroke="#1C5A96"/>
<path d="M698 50h6M698 52h6l-3 3z" fill="#333" stroke="#333" stroke-width=".5"/>
<path d="M709 36h4M709 39h4M709 42h4M709 45h4M709 48h4M709 51h4M709 54h4" stroke="#7A84A0" stroke-dasharray="1 1"/>
<path d="M722.500 43.500h5v7h-5zM730.500 43.500h5v7h-5zM724 43l2-2M732 43l2-2" fill="none" stroke="#333"/>
<path d="M743 45h6l-3 3z" fill="#333"/>
<path d="M755.500 37v18" stroke="#9AA6C8"/>
<path d="M767 43v-2h3M770 42h8v7h-4l-2 3v-3h-2zM764 42h6M767 39v6" fill="none" stroke="#A7AEC0" stroke-width="1.300"/>
<path d="M790 42h9v7h-4l-2 3v-3h-3zM786 43l3-3v6z" fill="none" stroke="#A7AEC0" stroke-width="1.300"/>
<path d="M811 42h9v7h-4l-2 3v-3h-3zM808 40l3 3-3 3z" fill="none" stroke="#A7AEC0" stroke-width="1.300"/>
<path d="M843 46h-12M836 40l-6 6 6 6" fill="none" stroke="#2D2D30" stroke-width="2.200"/>
<path d="M853 46h12M860 40l6 6-6 6" fill="none" stroke="#2D2D30" stroke-width="2.200"/>
<path d="M873.500 37v18" stroke="#9AA6C8"/>
<rect x="878.500" y="34.500" width="21" height="22" fill="#FFEFC9" stroke="#8E6B2E"/><rect x="900.500" y="34.500" width="21" height="22" fill="#FFEFC9" stroke="#8E6B2E"/>
<path d="M886 43h6v1.500h-6zM886 47h6v1.500h-6z" fill="#2D2D30"/>
<path d="M908 45v-3a3 3 0 0 1 6 0v3" fill="none" stroke="#2D2D30" stroke-width="1.500"/><rect x="907" y="45" width="8" height="7" fill="#2D2D30"/><rect x="910" y="47" width="2" height="3" fill="#FFEFC9"/>
<path d="M926 50h6M926 52h6l-3 3z" fill="#333" stroke="#333" stroke-width=".5"/>
<path d="M937 36h4M937 39h4M937 42h4M937 45h4M937 48h4M937 51h4M937 54h4" stroke="#7A84A0" stroke-dasharray="1 1"/>
<path d="M950 39l5 6h-5z" fill="#1C5A96"/><path d="M951 46h11M951 50h11M951 53h11M952 46v7M962 46v7" fill="none" stroke="#333"/>
<path d="M971 43h3M971 46h3M971 49h3M976 41h8v11h-8zM976 44h8M976 47h8" fill="none" stroke="#A7AEC0" stroke-width="1.200"/>
<path d="M992.500 37v18" stroke="#9AA6C8"/>
<path d="M1003 42h12M1006 45h9M1006 48h9M1003 51h12" stroke="#A7AEC0" stroke-width="1.200"/>
<path d="M1025 42h6M1030 45h7M1030 48h7M1025 51h12M1027 44l2 2-2 2" fill="none" stroke="#A7AEC0" stroke-width="1.200"/>
<path d="M1045.500 37v18" stroke="#9AA6C8"/>
<path d="M1054 39h10v16l-5-4-5 4z" fill="#2D2D30"/>
<path d="M1080 40h8v14l-4-3v-3h-4l3-3-3-3z" fill="#A7AEC0"/>
<path d="M1102 40h8v14l-4-3v-3h-5l3-3-3-3z" fill="#A7AEC0"/>
<path d="M1124 40h8v14l-4-3v-3M1120 40l5 5M1125 40l-5 5" fill="#A7AEC0" stroke="#A7AEC0"/>
<path d="M1141 50h6M1141 52h6l-3 3z" fill="#333" stroke="#333" stroke-width=".5"/>
<!-- tab icons -->
<path d="M1483 83v-3a2.500 2.500 0 0 1 5 0v3" fill="none" stroke="#333" stroke-width="1.200"/><rect x="1482" y="83" width="7" height="6" fill="#333"/>
<path d="M1500 81l4 1v-3h3v3l3 1v6h-4l-2-3h-4z" fill="#4F3A12"/>
<path d="M1520 77l10 10M1530 77l-10 10" stroke="#4F3A12" stroke-width="1.500"/>
<path d="M1538 81h8l-4 4z" fill="#CCD5F0"/>
<circle cx="1560" cy="81" r="3.500" fill="none" stroke="#CCD5F0" stroke-width="2.500"/><circle cx="1560" cy="81" r="5.300" fill="none" stroke="#CCD5F0" stroke-width="1.500" stroke-dasharray="2 2"/>
<!-- editor scroll arrows -->
<path d="M787 120l5-6 5 6z" fill="#7F8596"/><path d="M787 946l5 7 5-7z" fill="#7F8596"/>
<path d="M1552 120l5-6 5 6z" fill="#7F8596"/><path d="M1552 946l5 7 5-7z" fill="#7F8596"/>
<path d="M96 965h5l-2.500 3z" fill="#333"/>
<path d="M113 961v10l-4-5z" fill="#7F8596"/><path d="M587 961v10l5-5z" fill="#7F8596"/>
<path d="M818 961v10l-5-5z" fill="#7F8596"/><path d="M1358 961v10l5-5z" fill="#7F8596"/>
<!-- ibeam -->
<path d="M194 681h4M194 694h4M196 681v13" stroke="#222" fill="none"/>
<!-- SE header -->
<path d="M1865 81h8l-4 4z" fill="#A9B6DA"/><path d="M1882 78h6M1883 78v6h4v-6M1881 84h8M1885 84v5" fill="none" stroke="#A9B6DA" stroke-width="1.200"/><path d="M1897 78l9 9M1906 78l-9 9" stroke="#A9B6DA" stroke-width="1.300"/>
<path d="M1865 885h8l-4 4z" fill="#A9B6DA"/><path d="M1882 882h6M1883 882v6h4v-6M1881 888h8M1885 888v5" fill="none" stroke="#A9B6DA" stroke-width="1.200"/><path d="M1897 882l9 9M1906 882l-9 9" stroke="#A9B6DA" stroke-width="1.300"/>
<!-- SE toolbar -->
<circle cx="1589" cy="108" r="6.500" fill="#A7AEC0"/><path d="M1593 108h-7M1588.500 105l-3 3 3 3" fill="none" stroke="#CCD5F0" stroke-width="1.600"/>
<circle cx="1611" cy="108" r="6.500" fill="#A7AEC0"/><path d="M1607 108h7M1611.500 105l3 3-3 3" fill="none" stroke="#CCD5F0" stroke-width="1.600"/>
<path d="M1626 109l7-7 7 7M1628 108v7h10v-7M1632 115v-4h2v4" fill="none" stroke="#2D2D30" stroke-width="1.500"/>
<path d="M1647 107l5-3v11l-5-3-3 2v-7z" fill="#8661C5"/><path d="M1654 101h7v14h-7z" fill="#F8F9FE" stroke="#2D2D30"/><path d="M1656 104h3M1656 107h3M1656 110h3" stroke="#2D2D30"/>
<path d="M1670.500 97v22" stroke="#9AA6C8"/>
<circle cx="1688" cy="110" r="5.500" fill="none" stroke="#2D2D30" stroke-width="1.200"/><path d="M1688 107v3h3M1681 100h5" fill="none" stroke="#2D2D30" stroke-width="1.200"/>
<path d="M1700 107h6l-3 3z" fill="#333"/>
<path d="M1714 106c1-4 8-5 11-2M1726 114c-3 3-9 2-11-1" fill="none" stroke="#00539C" stroke-width="2.400"/><path d="M1722 107h6v-6zM1718 111h-6v6z" fill="#00539C"/>
<path d="M1746 104a6 6 0 1 0 1.500 6" fill="none" stroke="#00539C" stroke-width="2"/><path d="M1743 99v6h5z" fill="#00539C"/>
<path d="M1760 105h7v8h-7zM1763 105v-3h7v8h-3" fill="none" stroke="#2D2D30" stroke-width="1.200"/>
<path d="M1780 100h8l3 3v13h-11z" fill="none" stroke="#2D2D30"/><path d="M1783 104h9v11h-9zM1785 107h5M1785 110h5" fill="#E1F0C4" stroke="#2D2D30" stroke-width=".8"/>
<path d="M1801.500 97v22" stroke="#9AA6C8"/>
<path d="M1814 104l-4 4 4 4M1819 104l4 4-4 4" fill="none" stroke="#2D2D30" stroke-width="1.500"/>
<path d="M1845 102c-3-2-7 1-5 5l-8 8 2 2 8-8c4 2 7-2 5-5l-3 3-2-2z" fill="#2D2D30"/>
<path d="M1853 110h14M1860 107h7v3h-7z" fill="#2D2D30" stroke="#2D2D30" stroke-width="1.500"/>
<!-- SE search icon -->
<circle cx="1893" cy="131" r="4" fill="none" stroke="#444" stroke-width="1.600"/><path d="M1890 134l-4 5" stroke="#444" stroke-width="2"/><path d="M1903 132h5l-2.500 3z" fill="#444"/>
<!-- tree scroll -->
<path d="M1899 159l5-5 5 5z" fill="#7F8596"/><path d="M1899 819l5 6 5-6z" fill="#7F8596"/>
<path d="M1586 835v9l-5-4.500zM1887 835v9l5-4.500z" fill="#7F8596"/>
<!-- properties -->
<path d="M1903 908h5l-2.500 3z" fill="#1E1E1E"/>
<path d="M1581 928h4v4h-4zM1581 937h4v4h-4zM1588 928h7M1588 931h7M1588 934h7M1588 938h7M1588 941h5" fill="#333" stroke="#333"/>
<path d="M1605 928h5M1604.500 933l3-6 3 6M1604.500 937h6l-6 5h6" fill="none" stroke="#333" stroke-width="1.300"/><path d="M1615 928v11M1612 936l3 4 3-4" fill="none" stroke="#00539C" stroke-width="1.500"/>
<path d="M1626.500 926v19" stroke="#9AA6C8"/>
<path d="M1647 928c-3-2-7 1-5 5l-8 8 2 2 8-8c4 2 7-2 5-5l-3 3-2-2z" fill="#A7AEC0"/>
<!-- status -->
<path d="M8 1023h13l-3 12H4z" fill="none" stroke="#F0F3FB" stroke-width="1.200"/>
<path d="M1589 1036v-11M1585 1029l4-5 4 5" fill="none" stroke="#F0F3FB" stroke-width="2"/>
<path d="M1622 1031h7l-3.500-3zM1754 1031h7l-3.500-3zM1847 1031h7l-3.500-3z" fill="#F0F3FB"/>
<path d="M1654 1035l2-5 7-7 3 3-7 7z" fill="#F0F3FB"/>
<path d="M1708 1022l8 7.500-8 7.500-7-7.500z" fill="#F0F3FB"/><circle cx="1708" cy="1029" r="1.500" fill="#40518B"/><path d="M1708 1029l3-3" stroke="#40518B"/>
<path d="M1785 1024l6 7v6M1798 1024l-7 7" fill="none" stroke="#F0F3FB" stroke-width="1.500"/>
<path d="M1882 1033c2-2 1-4 2-7 1-4 8-4 9 0 1 3 0 5 2 7z" fill="#C3CBE3"/>
</svg>
<div class="a" style="left:1891px;top:1027px;width:10px;height:10px;line-height:10px;border-radius:5px;background:#E51400;color:#fff;font-size:9px;text-align:center;z-index:2">1</div>
</body></html>
